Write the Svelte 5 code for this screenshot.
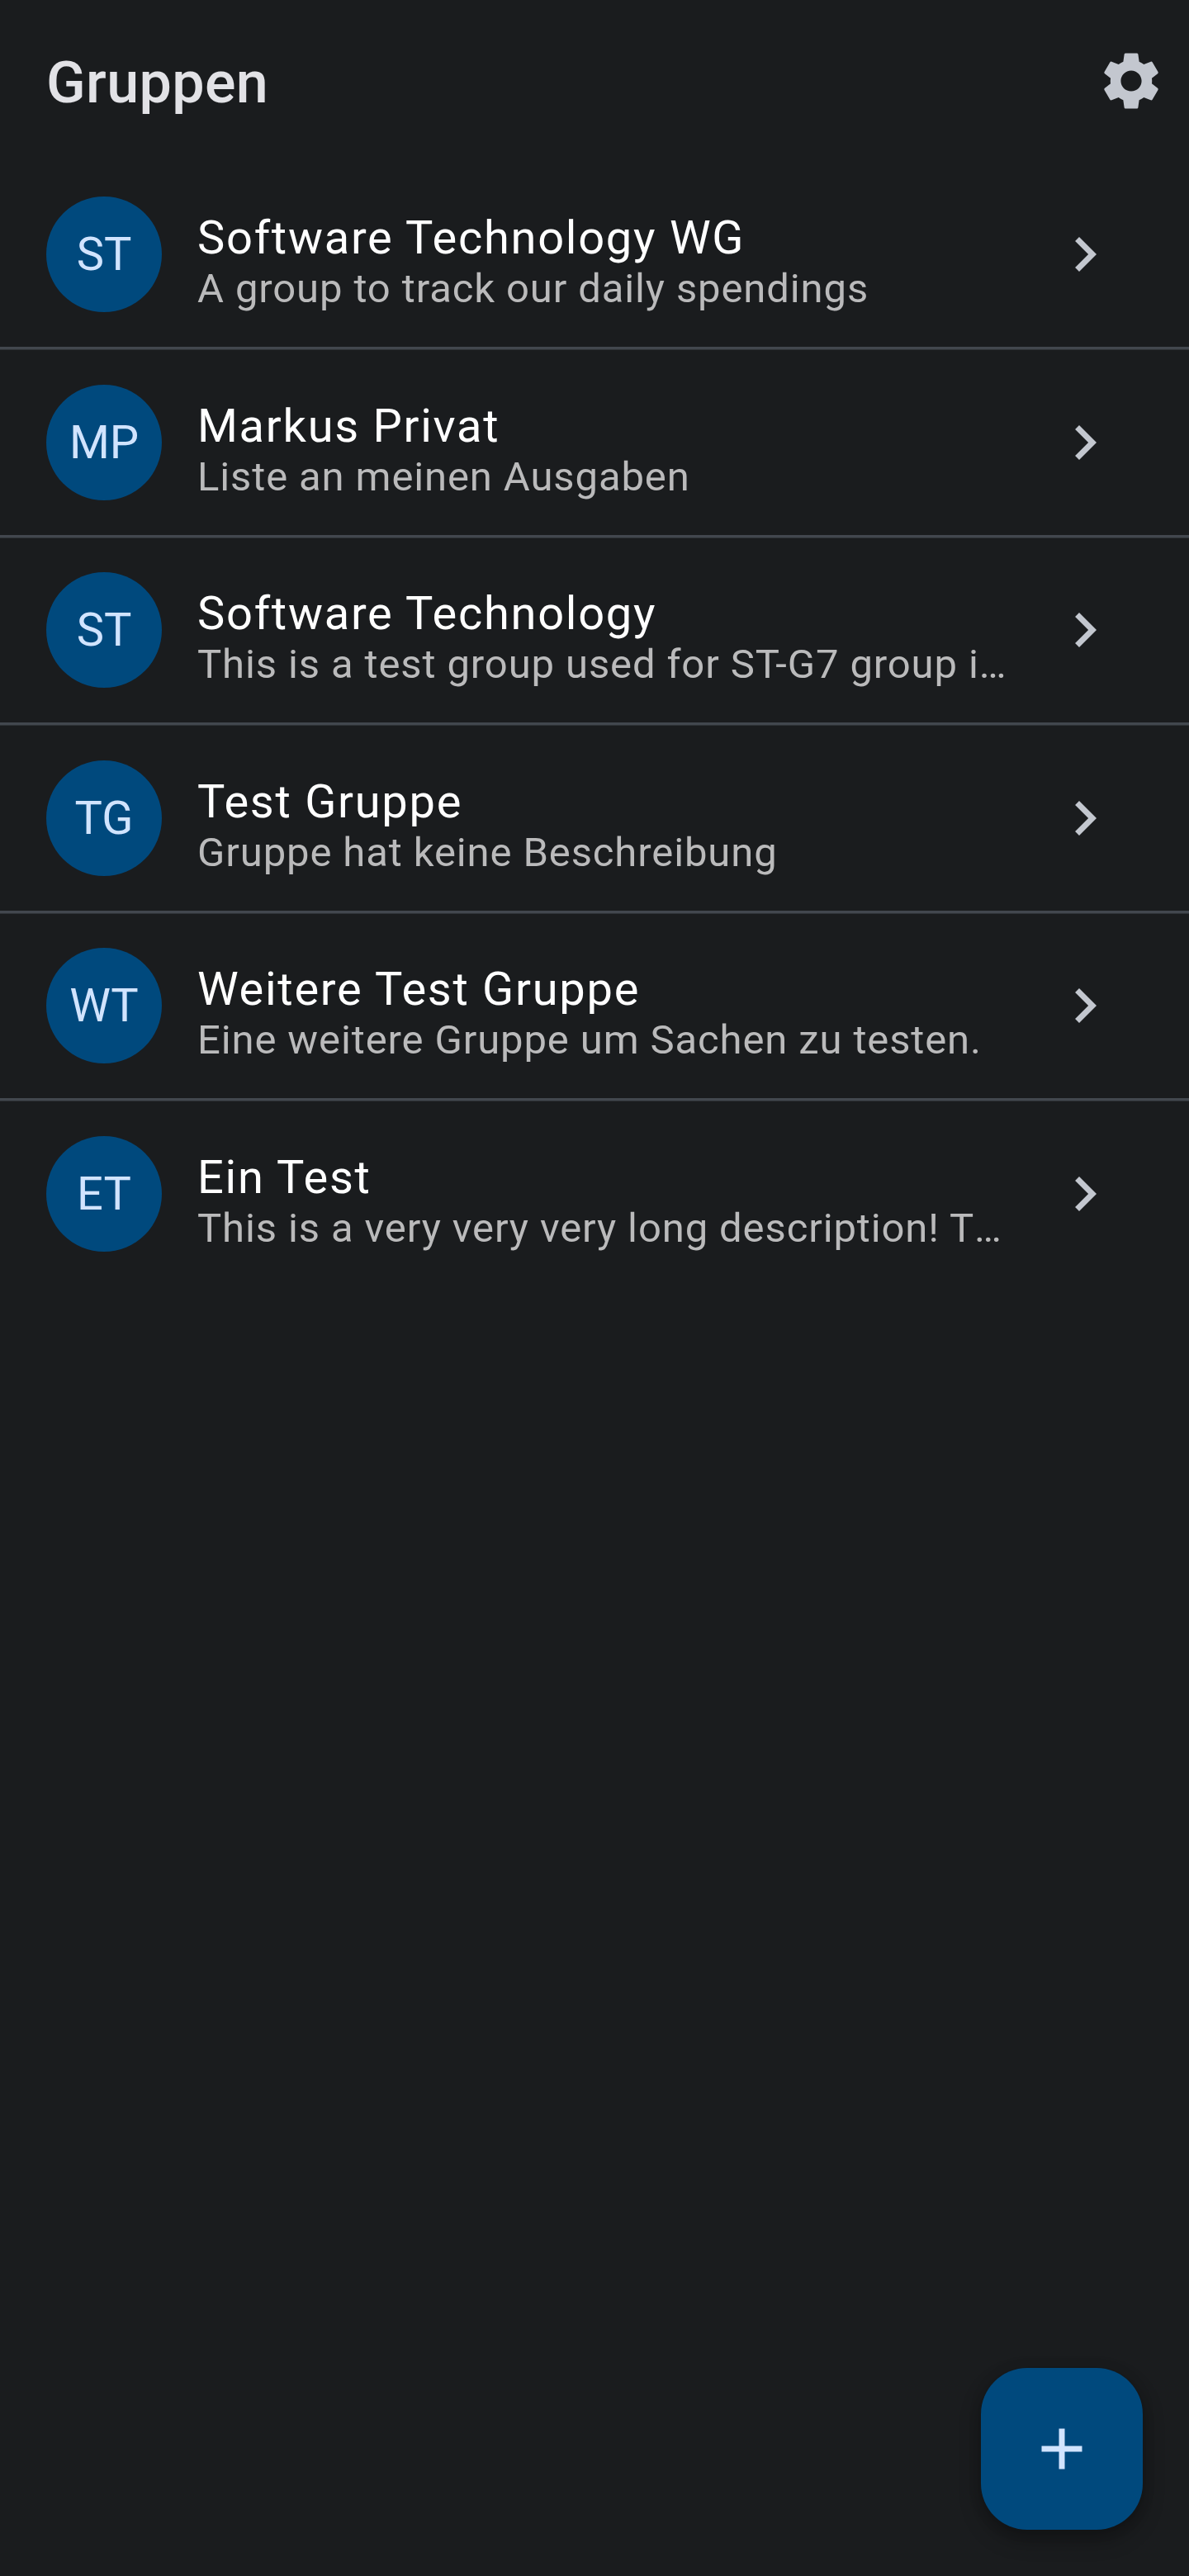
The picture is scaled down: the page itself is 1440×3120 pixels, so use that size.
<script>
  const groups = [
    { initials: 'ST', name: 'Software Technology WG', description: 'A group to track our daily spendings' },
    { initials: 'MP', name: 'Markus Privat', description: 'Liste an meinen Ausgaben' },
    { initials: 'ST', name: 'Software Technology', description: 'This is a test group used for ST-G7 group i', truncated: true },
    { initials: 'TG', name: 'Test Gruppe', description: 'Gruppe hat keine Beschreibung' },
    { initials: 'WT', name: 'Weitere Test Gruppe', description: 'Eine weitere Gruppe um Sachen zu testen.' },
    { initials: 'ET', name: 'Ein Test', description: 'This is a very very very long description! T', truncated: true }
  ];
</script>

<div class="screen">
  <header>
    <h1>Gruppen</h1>
    <button class="settings" aria-label="Einstellungen">
      <svg viewBox="0 0 24 24"><path d="M19.14 12.94c.04-.3.06-.61.06-.94 0-.32-.02-.64-.07-.94l2.03-1.58c.18-.14.23-.41.12-.61l-1.92-3.32c-.12-.22-.37-.29-.59-.22l-2.39.96c-.5-.38-1.03-.7-1.62-.94l-.36-2.54c-.04-.24-.24-.41-.48-.41h-3.84c-.24 0-.43.17-.47.41l-.36 2.54c-.59.24-1.13.57-1.62.94l-2.39-.96c-.22-.08-.47 0-.59.22L2.74 8.87c-.12.21-.08.47.12.61l2.03 1.58c-.05.3-.09.63-.09.94s.02.64.07.94l-2.03 1.58c-.18.14-.23.41-.12.61l1.92 3.32c.12.22.37.29.59.22l2.39-.96c.5.38 1.03.7 1.62.94l.36 2.54c.05.24.24.41.48.41h3.84c.24 0 .44-.17.47-.41l.36-2.54c.59-.24 1.13-.56 1.62-.94l2.39.96c.22.08.47 0 .59-.22l1.92-3.32c.12-.22.07-.47-.12-.61l-2.01-1.58zM12 15.6c-1.98 0-3.6-1.62-3.6-3.6s1.62-3.6 3.6-3.6 3.6 1.62 3.6 3.6-1.62 3.6-3.6 3.6z" /></svg>
    </button>
  </header>
  <ul>
    {#each groups as group}
      <li>
        <div class="row">
          <span class="avatar">{group.initials}</span>
          <div class="text">
            <div class="name">{group.name}</div>
            <div class="description">{group.description}{#if group.truncated}<span class="ellipsis">…</span>{/if}</div>
          </div>
          <svg class="chevron" viewBox="0 0 24 24"><path d="M10 6L8.59 7.41 13.17 12l-4.58 4.59L10 18l6-6z" /></svg>
        </div>
        <div class="divider"></div>
      </li>
    {/each}
  </ul>
  <footer>
    <button class="add" aria-label="Gruppe hinzufügen">
      <svg viewBox="0 0 24 24"><path d="M19 13h-6v6h-2v-6H5v-2h6V5h2v6h6v2z" /></svg>
    </button>
  </footer>
</div>

<style>
  :global(body) { background: #1a1c1e; }
  .screen {
    box-sizing: border-box;
    display: flex;
    flex-direction: column;
    width: 1440px;
    height: 3120px;
    background: #1a1c1e;
    font-family: Roboto, sans-serif;
  }
  header {
    box-sizing: border-box;
    display: flex;
    align-items: center;
    justify-content: space-between;
    height: 196px;
    padding: 0 28px 0 56px;
  }
  h1 {
    margin: 0;
    padding-top: 3px;
    color: #e2e2e6;
    font-size: 70px;
    font-weight: 500;
    line-height: 84px;
    letter-spacing: 0.38px;
  }
  button { padding: 0; border: 0; background: none; }
  svg { display: block; fill: #c3c7cf; }
  .settings svg { width: 84px; height: 84px; }
  ul { margin: 0; padding: 0; list-style: none; }
  li { height: 227.5px; }
  .row {
    box-sizing: border-box;
    display: flex;
    align-items: center;
    height: 224px;
    padding: 0 84px 0 56px;
  }
  /* 3.5px rule: three solid rows and a softer last one */
  .divider { height: 4px; background: linear-gradient(#42474e 75%, #2e3236 75%); }
  li:last-child .divider { display: none; }
  .avatar {
    flex: none;
    width: 140px;
    height: 140px;
    border-radius: 50%;
    background: #00497d;
    color: #d1e4ff;
    font-size: 56px;
    line-height: 140px;
    text-align: center;
  }
  .text { flex: 1; min-width: 0; margin-left: 43px; padding-top: 20px; white-space: nowrap; }
  .name { color: #fff; font-size: 56px; line-height: 64px; letter-spacing: 1.73px; }
  .description { color: #bababb; font-size: 49px; line-height: 60px; letter-spacing: 0.88px; }
  .ellipsis { display: inline-block; }
  .chevron { flex: none; width: 84px; height: 84px; }
  footer { display: flex; justify-content: flex-end; margin-top: auto; padding: 0 56px 56px 0; }
  .add {
    display: grid;
    place-items: center;
    width: 196px;
    height: 196px;
    border-radius: 56px;
    background: #00497d;
    box-shadow: 0 12px 26px rgba(0, 0, 0, 0.3), 0 2px 16px rgba(0, 0, 0, 0.12);
  }
  .add svg { width: 84px; height: 84px; fill: #d1e4ff; }
</style>
